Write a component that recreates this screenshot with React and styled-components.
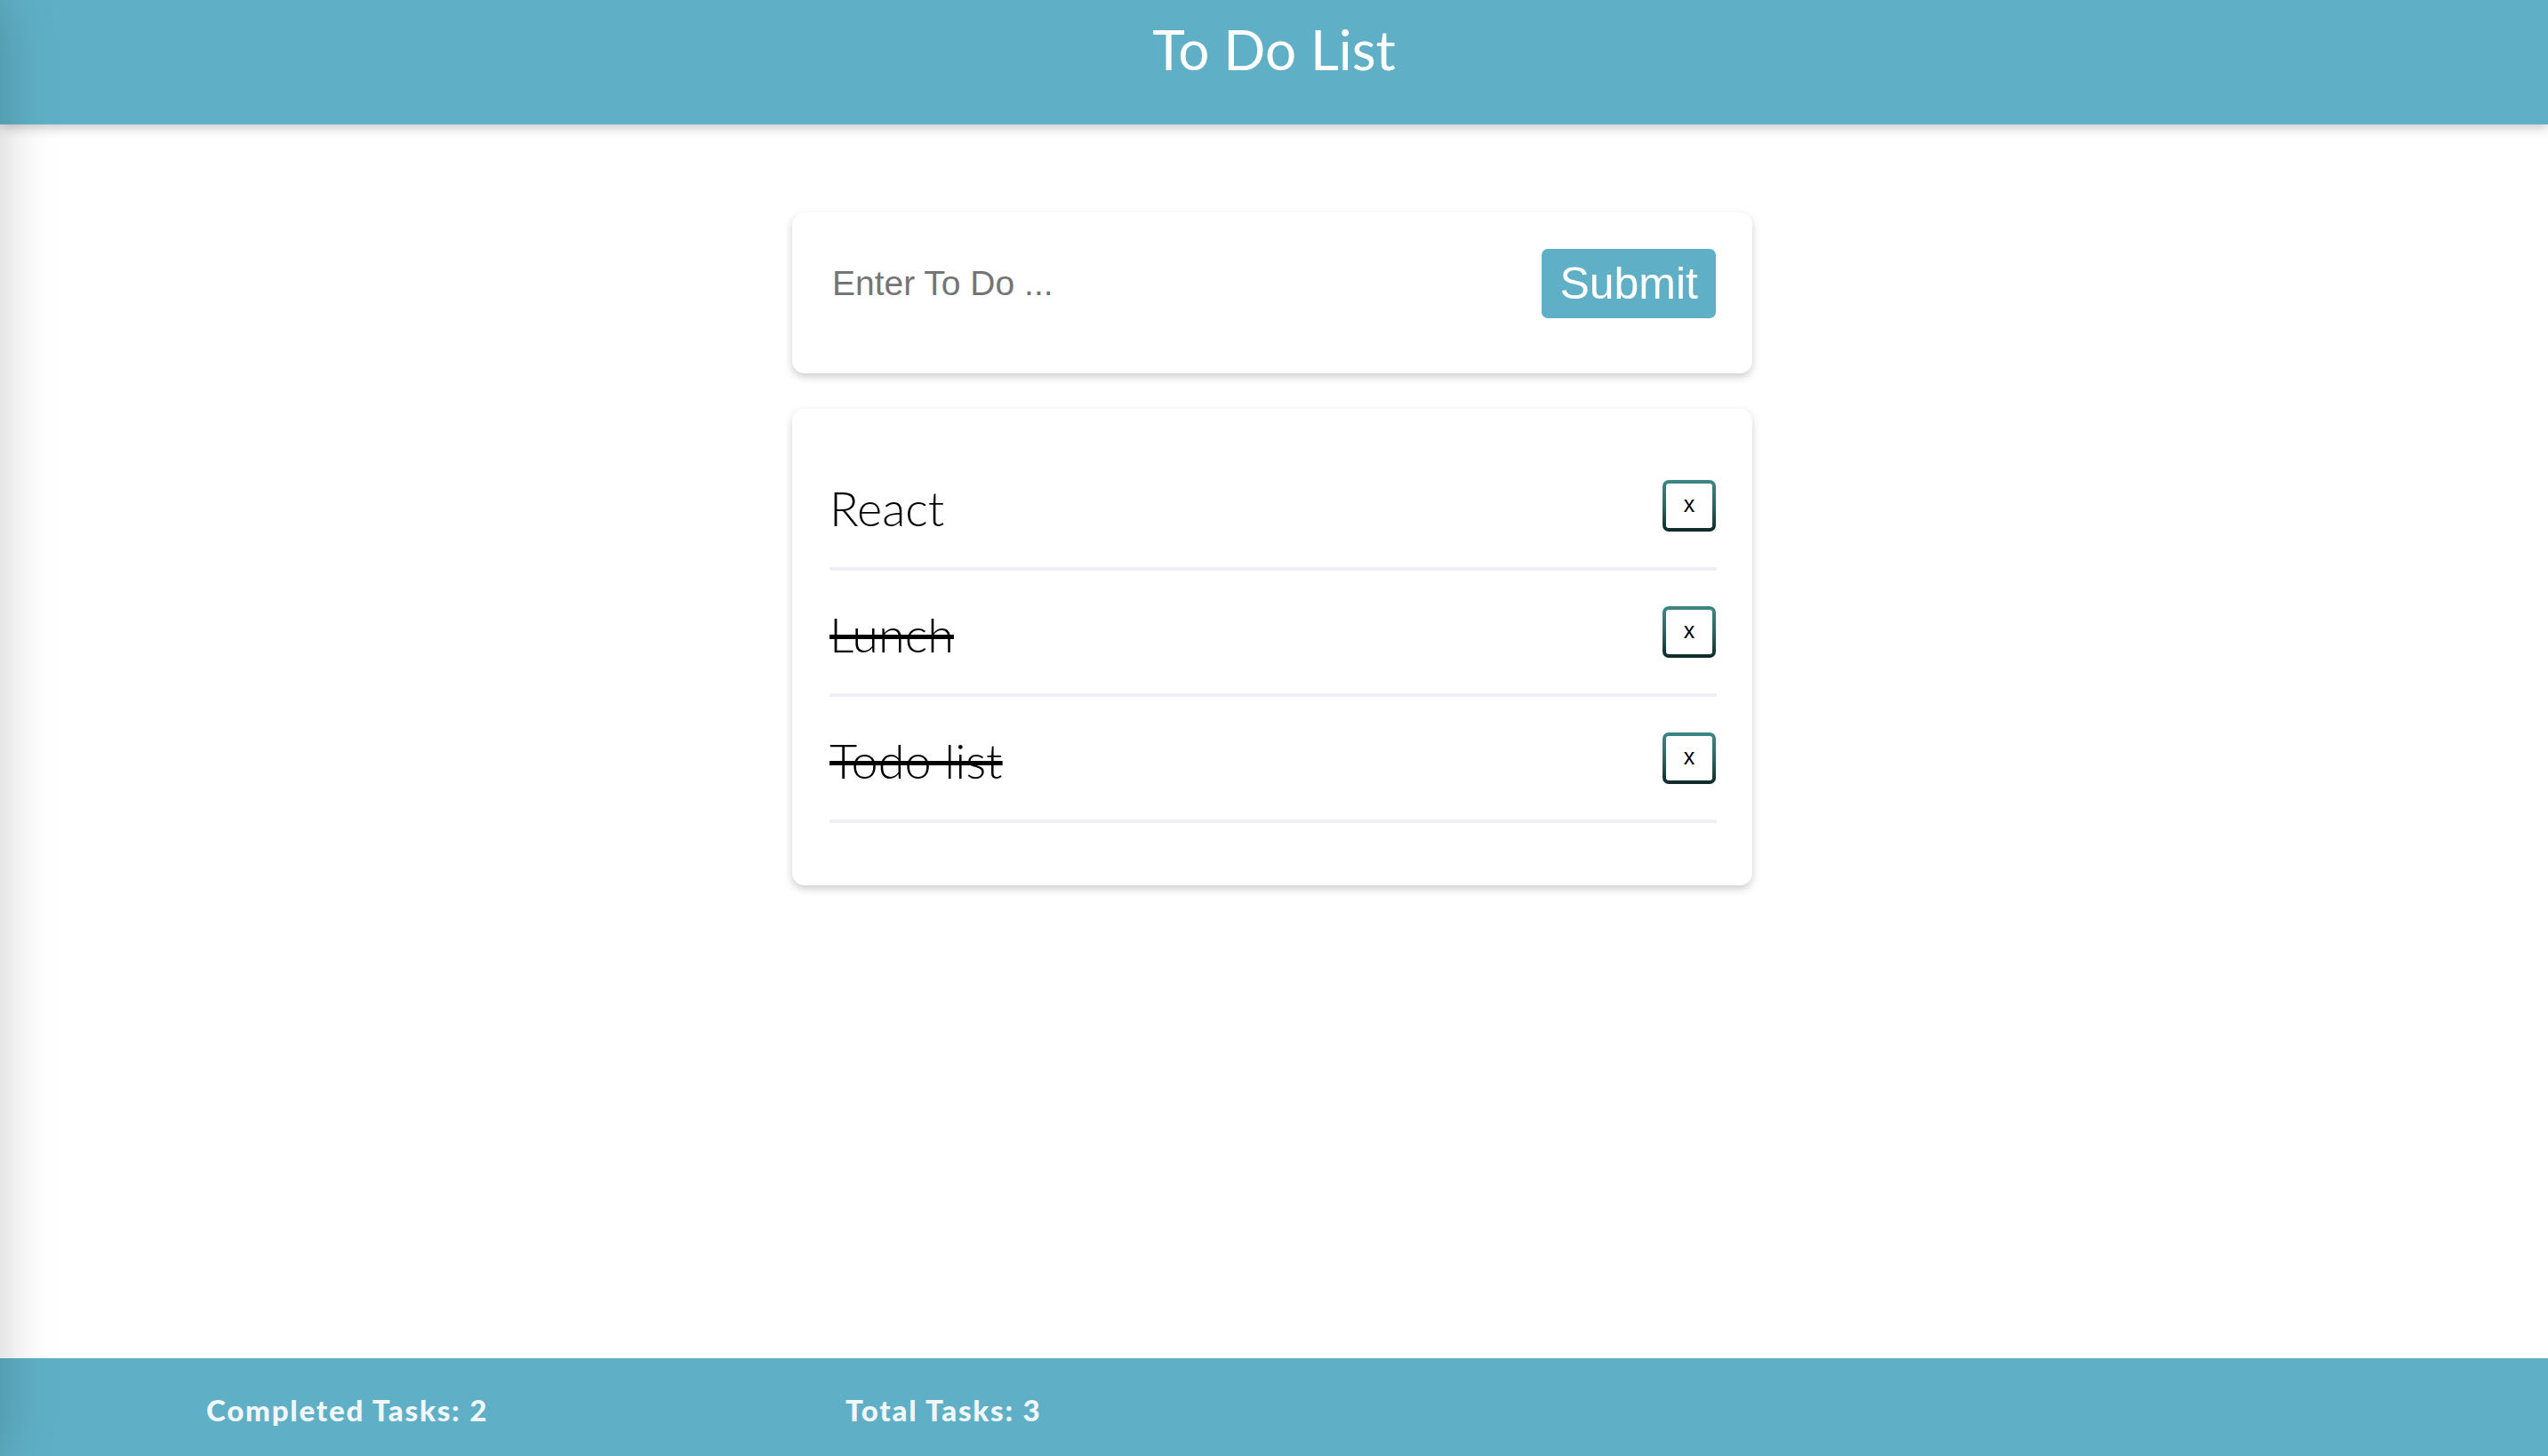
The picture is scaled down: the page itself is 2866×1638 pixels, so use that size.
import React from "react";
import styled, { createGlobalStyle } from "styled-components";

const Global = createGlobalStyle`
  html, body { margin: 0; padding: 0; background: #ffffff; }
  body { font-family: "Liberation Sans", Arial, sans-serif; }
  * { box-sizing: border-box; }
`;

const Page = styled.div`
  min-height: 100vh;
  display: flex;
  flex-direction: column;
  background: #ffffff;
`;

const EdgeShade = styled.div`
  position: fixed;
  top: 0;
  left: -400px;
  width: 400px;
  height: 100vh;
  box-shadow: 0 0 60px rgba(0, 0, 0, 0.2);
  z-index: 5;
  pointer-events: none;
`;

const Header = styled.header`
  height: 140px;
  background: #5fb0c6;
  display: flex;
  justify-content: center;
  padding-top: 18px;
  box-shadow: 0 4px 12px rgba(0, 0, 0, 0.22);
  position: relative;
  z-index: 2;
`;

const Title = styled.h1`
  margin: 0;
  font-family: Lato, "Open Sans", sans-serif;
  font-weight: 400;
  font-size: 62px;
  line-height: 1.2;
  color: #ffffff;
  height: fit-content;
`;

const Main = styled.main`
  flex: 1;
  display: flex;
  flex-direction: column;
  align-items: center;
  gap: 40px;
  padding: 99px 4px 0 0;
`;

const Card = styled.section`
  width: 1080px;
  background: #ffffff;
  border-radius: 14px;
  box-shadow: 0 4px 10px rgba(0, 0, 0, 0.2);
`;

const Form = styled(Card).attrs({ as: "form" })`
  display: flex;
  align-items: center;
  gap: 20px;
  padding: 41px 41px 62px 45px;
`;

const Input = styled.input`
  flex: 1;
  border: none;
  outline: none;
  padding: 0;
  font-family: "Liberation Sans", Arial, sans-serif;
  font-size: 39px;
  color: #333;
  background: transparent;
  &::placeholder { color: #757575; }
`;

const SubmitButton = styled.button`
  height: 78px;
  padding: 0 20px;
  border: none;
  border-radius: 7px;
  background: #5fb0c6;
  color: #ffffff;
  font-family: "Liberation Sans", Arial, sans-serif;
  font-size: 50px;
  line-height: 78px;
  cursor: pointer;
`;

const ListCard = styled(Card)`
  padding: 40px 40px 70px 42px;
`;

const List = styled.ul`
  list-style: none;
  margin: 0;
  padding: 0;
`;

const Row = styled.li`
  height: 142px;
  display: flex;
  align-items: center;
  justify-content: space-between;
  border-bottom: 4px solid #f0f0f4;
`;

const ItemText = styled.span`
  font-family: Lato, "Open Sans", sans-serif;
  font-weight: 300;
  font-size: 54px;
  line-height: 1.2;
  padding-top: 6px;
  color: #000000;
  text-decoration: ${(p) => (p.$done ? "line-through" : "none")};
  text-decoration-thickness: 5px;
`;

const DeleteButton = styled.button`
  width: 60px;
  height: 58px;
  margin-right: 1px;
  border: 4px solid transparent;
  border-radius: 7px;
  background:
    linear-gradient(#ffffff, #ffffff) padding-box,
    linear-gradient(180deg, #3e8785 0%, #2c6664 50%, #0f2828 100%) border-box;
  font-family: "Liberation Sans", Arial, sans-serif;
  font-size: 25px;
  color: #000;
  display: flex;
  align-items: center;
  justify-content: center;
  padding: 0 0 4px;
  cursor: pointer;
`;

const Footer = styled.footer`
  height: 110px;
  background: #5fb0c6;
  display: grid;
  grid-template-columns: 719px 719px;
  align-items: center;
  padding: 5px 0 0 232px;
`;

const Stat = styled.span`
  font-family: Lato, "Open Sans", sans-serif;
  font-weight: 900;
  font-size: 33px;
  letter-spacing: 1.8px;
  color: #f2f7fa;
`;

const todos = [
  { text: "React", done: false },
  { text: "Lunch", done: true },
  { text: "Todo list", done: true },
];

export default function App() {
  const completed = todos.filter((t) => t.done).length;
  return (
    <Page>
      <Global />
      <EdgeShade />
      <Header>
        <Title>To Do List</Title>
      </Header>
      <Main>
        <Form onSubmit={(e) => e.preventDefault()}>
          <Input placeholder="Enter To Do ..." />
          <SubmitButton type="submit">Submit</SubmitButton>
        </Form>
        <ListCard>
          <List>
            {todos.map((t) => (
              <Row key={t.text}>
                <ItemText $done={t.done}>{t.text}</ItemText>
                <DeleteButton type="button">x</DeleteButton>
              </Row>
            ))}
          </List>
        </ListCard>
      </Main>
      <Footer>
        <Stat>Completed Tasks: {completed}</Stat>
        <Stat>Total Tasks: {todos.length}</Stat>
      </Footer>
    </Page>
  );
}
